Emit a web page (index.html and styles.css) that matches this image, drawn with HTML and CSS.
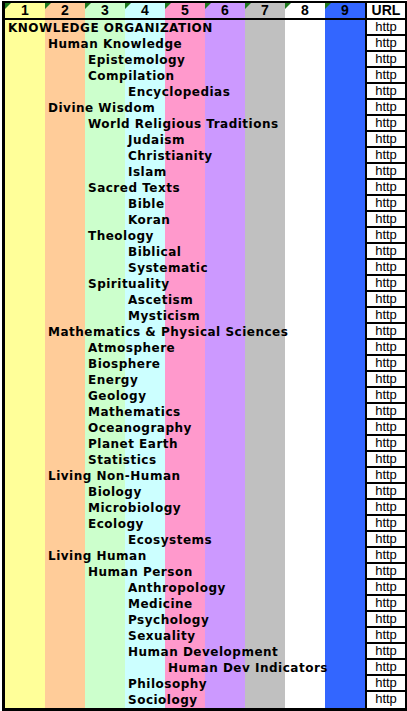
FILE: index.html
```html
<!DOCTYPE html>
<html lang="en">
<head>
    <meta charset="UTF-8">
    <title>Knowledge Organization</title>
    <link rel="stylesheet" href="styles.css">
</head>
<body>
    <div class="sheet">
        <div class="head">
            <div class="hcell c1">1</div>
            <div class="hcell c2">2</div>
            <div class="hcell c3">3</div>
            <div class="hcell c4">4</div>
            <div class="hcell c5">5</div>
            <div class="hcell c6">6</div>
            <div class="hcell c7">7</div>
            <div class="hcell c8">8</div>
            <div class="hcell c9">9</div>
            <div class="hurl">URL</div>
        </div>
        <div class="rows">
            <div class="row"><span class="label l0">KNOWLEDGE ORGANIZATION</span><span class="url">http</span></div>
            <div class="row"><span class="label l1">Human Knowledge</span><span class="url">http</span></div>
            <div class="row"><span class="label l2">Epistemology</span><span class="url">http</span></div>
            <div class="row"><span class="label l2">Compilation</span><span class="url">http</span></div>
            <div class="row"><span class="label l3">Encyclopedias</span><span class="url">http</span></div>
            <div class="row"><span class="label l1">Divine Wisdom</span><span class="url">http</span></div>
            <div class="row"><span class="label l2">World Religious Traditions</span><span class="url">http</span></div>
            <div class="row"><span class="label l3">Judaism</span><span class="url">http</span></div>
            <div class="row"><span class="label l3">Christianity</span><span class="url">http</span></div>
            <div class="row"><span class="label l3">Islam</span><span class="url">http</span></div>
            <div class="row"><span class="label l2">Sacred Texts</span><span class="url">http</span></div>
            <div class="row"><span class="label l3">Bible</span><span class="url">http</span></div>
            <div class="row"><span class="label l3">Koran</span><span class="url">http</span></div>
            <div class="row"><span class="label l2">Theology</span><span class="url">http</span></div>
            <div class="row"><span class="label l3">Biblical</span><span class="url">http</span></div>
            <div class="row"><span class="label l3">Systematic</span><span class="url">http</span></div>
            <div class="row"><span class="label l2">Spirituality</span><span class="url">http</span></div>
            <div class="row"><span class="label l3">Ascetism</span><span class="url">http</span></div>
            <div class="row"><span class="label l3">Mysticism</span><span class="url">http</span></div>
            <div class="row"><span class="label l1">Mathematics &amp; Physical Sciences</span><span class="url">http</span></div>
            <div class="row"><span class="label l2">Atmosphere</span><span class="url">http</span></div>
            <div class="row"><span class="label l2">Biosphere</span><span class="url">http</span></div>
            <div class="row"><span class="label l2">Energy</span><span class="url">http</span></div>
            <div class="row"><span class="label l2">Geology</span><span class="url">http</span></div>
            <div class="row"><span class="label l2">Mathematics</span><span class="url">http</span></div>
            <div class="row"><span class="label l2">Oceanography</span><span class="url">http</span></div>
            <div class="row"><span class="label l2">Planet Earth</span><span class="url">http</span></div>
            <div class="row"><span class="label l2">Statistics</span><span class="url">http</span></div>
            <div class="row"><span class="label l1">Living Non-Human</span><span class="url">http</span></div>
            <div class="row"><span class="label l2">Biology</span><span class="url">http</span></div>
            <div class="row"><span class="label l2">Microbiology</span><span class="url">http</span></div>
            <div class="row"><span class="label l2">Ecology</span><span class="url">http</span></div>
            <div class="row"><span class="label l3">Ecosystems</span><span class="url">http</span></div>
            <div class="row"><span class="label l1">Living Human</span><span class="url">http</span></div>
            <div class="row"><span class="label l2">Human Person</span><span class="url">http</span></div>
            <div class="row"><span class="label l3">Anthropology</span><span class="url">http</span></div>
            <div class="row"><span class="label l3">Medicine</span><span class="url">http</span></div>
            <div class="row"><span class="label l3">Psychology</span><span class="url">http</span></div>
            <div class="row"><span class="label l3">Sexuality</span><span class="url">http</span></div>
            <div class="row"><span class="label l3">Human Development</span><span class="url">http</span></div>
            <div class="row"><span class="label l4">Human Dev Indicators</span><span class="url">http</span></div>
            <div class="row"><span class="label l3">Philosophy</span><span class="url">http</span></div>
            <div class="row"><span class="label l3">Sociology</span><span class="url">http</span></div>
        </div>
    </div>
</body>
</html>
```

FILE: styles.css
```css
body {
    margin: 0;
    background: #ffffff;
    font-family: "DejaVu Sans", Verdana, sans-serif;
    color: #000000;
}

.sheet {
    width: 400px;
    margin: 1px 0 0 2px;
    border: 3px solid #000000;
    border-top-width: 2px;
}

.head {
    display: flex;
    height: 17px;
    border-bottom: 2px solid #000000;
    box-sizing: border-box;
}

.hcell {
    position: relative;
    width: 40px;
    text-align: center;
    font-family: "Liberation Sans", Arial, sans-serif;
    font-weight: bold;
    font-size: 14px;
    line-height: 15px;
}

.hcell::before {
    content: "";
    position: absolute;
    left: 0;
    top: 0;
    border-top: 6px solid #1f7a1f;
    border-right: 6px solid transparent;
}

.hurl {
    width: 38px;
    border-left: 2px solid #000000;
    background: #ffffff;
    text-align: center;
    font-family: "Liberation Sans", Arial, sans-serif;
    font-weight: bold;
    font-size: 14px;
    line-height: 15px;
}

.c1 { background: #ffff99; }
.c2 { background: #ffcc99; }
.c3 { background: #ccffcc; }
.c4 { background: #ccffff; }
.c5 { background: #ff99cc; }
.c6 { background: #cc99ff; }
.c7 { background: #c0c0c0; }
.c8 { background: #ffffff; }
.c9 { background: #3366ff; }

.rows {
    background: linear-gradient(to right,
        #ffff99 0 40px, #ffcc99 40px 80px, #ccffcc 80px 120px,
        #ccffff 120px 160px, #ff99cc 160px 200px, #cc99ff 200px 240px,
        #c0c0c0 240px 280px, #ffffff 280px 320px, #3366ff 320px 360px,
        #ffffff 360px 400px);
}

.row {
    display: flex;
    height: 16px;
}

.label {
    width: 360px;
    box-sizing: border-box;
    padding-left: 3px;
    white-space: nowrap;
    font-weight: bold;
    font-size: 12px;
    letter-spacing: 0.5px;
    line-height: 16px;
}

.l1 { padding-left: 43px; }
.l2 { padding-left: 83px; }
.l3 { padding-left: 123px; }
.l4 { padding-left: 163px; }

.url {
    width: 40px;
    box-sizing: border-box;
    border-left: 2px solid #000000;
    border-bottom: 2px solid #000000;
    text-align: center;
    font-family: "Liberation Sans", Arial, sans-serif;
    font-size: 13px;
    line-height: 14px;
}

.row:last-child .url {
    border-bottom: none;
}
```
